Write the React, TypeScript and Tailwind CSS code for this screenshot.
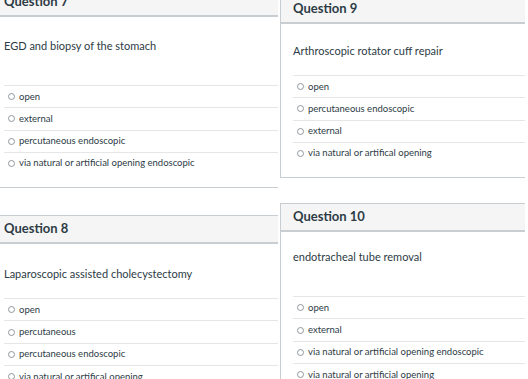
import React from "react";

type Question = {
  id: number;
  text: string;
  top: string; // space above the question text
  gap: string; // space between question text and the options
  options: string[];
};

const leftQuestions: Question[] = [
  {
    id: 7,
    text: "EGD and biopsy of the stomach",
    top: "pt-[21px]",
    gap: "mt-[31px]",
    options: [
      "open",
      "external",
      "percutaneous endoscopic",
      "via natural or artificial opening endoscopic",
    ],
  },
  {
    id: 8,
    text: "Laparoscopic assisted cholecystectomy",
    top: "pt-[22px]",
    gap: "mt-[16px]",
    options: [
      "open",
      "percutaneous",
      "percutaneous endoscopic",
      "via natural or artifical opening",
    ],
  },
];

const rightQuestions: Question[] = [
  {
    id: 9,
    text: "Arthroscopic rotator cuff repair",
    top: "pt-[19px]",
    gap: "mt-[16px]",
    options: [
      "open",
      "percutaneous endoscopic",
      "external",
      "via natural or artifical opening",
    ],
  },
  {
    id: 10,
    text: "endotracheal tube removal",
    top: "pt-[17px]",
    gap: "mt-[31px]",
    options: [
      "open",
      "external",
      "via natural or artificial opening endoscopic",
      "via natural or artificial opening",
    ],
  },
];

const QuestionCard = ({ q, side }: { q: Question; side: "left" | "right" }) => {
  const pad = side === "left" ? "pl-[4px]" : "pl-[12px]";
  return (
    <div
      className={
        side === "left"
          ? "border-y border-[#c7cdd1] bg-white"
          : "border-y border-l border-[#c7cdd1] bg-white"
      }
    >
      <div
        className={`h-[28px] flex items-center bg-[#f5f5f5] border-b-2 border-[#c7cdd1] ${pad}`}
      >
        <h2 className="text-[13px] font-bold text-[#2d3b45]">Question {q.id}</h2>
      </div>
      <div className={`pb-[13px] ${q.top} ${pad}`}>
        <p className="text-[11px] leading-[16px] text-[#2d3b45]">{q.text}</p>
        <div className={q.gap}>
          {q.options.map((opt) => (
            <label
              key={opt}
              className="h-[22.3px] flex items-center border-t border-[#e4e6e8] text-[9.5px] text-[#2d3b45]"
            >
              <span className="ml-[4px] mr-[4px] w-[7px] h-[7px] rounded-full border border-[#8f979c] bg-white shrink-0" />
              {opt}
            </label>
          ))}
        </div>
      </div>
    </div>
  );
};

export default function App() {
  return (
    <div className="w-[528px] h-[379px] overflow-hidden bg-white flex items-start font-[Lato,sans-serif]">
      <div className="w-[278px] shrink-0 flex flex-col gap-[27px] -mt-[12px]">
        {leftQuestions.map((q) => (
          <QuestionCard key={q.id} q={q} side="left" />
        ))}
      </div>
      <div className="ml-[2px] w-[245px] shrink-0 flex flex-col gap-[25px] -mt-[5px]">
        {rightQuestions.map((q) => (
          <QuestionCard key={q.id} q={q} side="right" />
        ))}
      </div>
    </div>
  );
}
